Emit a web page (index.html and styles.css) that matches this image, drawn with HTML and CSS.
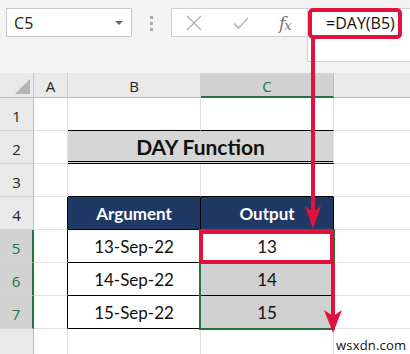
FILE: index.html
```html
<!DOCTYPE html>
<html>
<head>
<meta charset="utf-8">
<link rel="stylesheet" href="styles.css">
</head>
<body>
<div class="app">
  <div class="ribbon">
    <div class="namebox"><span class="ref">C5</span><span class="caret"></span></div>
    <div class="grip"><i></i><i></i><i></i></div>
    <div class="fxbtns">
      <svg class="ico-x" width="16" height="16" viewBox="0 0 16 16"><path d="M1 1L15 15M15 1L1 15" stroke="#b0b0b0" stroke-width="1.4" fill="none"/></svg>
      <svg class="ico-ok" width="16" height="14" viewBox="0 0 16 14"><path d="M1 7.5L5.5 12L15 2" stroke="#bdbdbd" stroke-width="1.8" fill="none"/></svg>
      <span class="fx">f<sub>x</sub></span>
    </div>
    <div class="fxinput">=DAY(B5)</div>
  </div>

  <div class="sheet">
    <div class="corner"><span class="tri"></span></div>
    <div class="colh">A</div>
    <div class="colh">B</div>
    <div class="colh sel">C</div>
    <div class="colh last"></div>

    <div class="rowh">1</div><div class="c"></div><div class="c bb"></div><div class="c bb"></div><div class="c last"></div>
    <div class="rowh">2</div><div class="c"></div><div class="c title">DAY Function</div><div class="c last"></div>
    <div class="rowh">3</div><div class="c"></div><div class="c bb"></div><div class="c bb"></div><div class="c last"></div>
    <div class="rowh">4</div><div class="c br"></div><div class="c th">Argument</div><div class="c th">Output</div><div class="c last"></div>
    <div class="rowh rsel">5</div><div class="c br"></div><div class="c td">13-Sep-22</div><div class="c td">13</div><div class="c last"></div>
    <div class="rowh rsel">6</div><div class="c br"></div><div class="c td">14-Sep-22</div><div class="c td shade">14</div><div class="c last"></div>
    <div class="rowh rsel">7</div><div class="c br"></div><div class="c td">15-Sep-22</div><div class="c td shade">15</div><div class="c last"></div>
    <div class="rowh end"></div><div class="c end"></div><div class="c end"></div><div class="c end"></div><div class="c end last"></div>
  </div>

  <div class="selection"></div>

  <svg class="marks" width="410" height="354" viewBox="0 0 410 354">
    <rect x="310" y="10" width="90" height="27" rx="3" fill="none" stroke="#e2123f" stroke-width="4"/>
    <line x1="313" y1="37" x2="313" y2="212" stroke="#e2123f" stroke-width="4"/>
    <polygon points="305,206 313,212 321,206 313,229" fill="#e2123f"/>
    <rect x="201" y="232" width="131" height="30" fill="none" stroke="#e2123f" stroke-width="4"/>
    <line x1="333" y1="262" x2="333" y2="318" stroke="#e2123f" stroke-width="4"/>
    <polygon points="324,310 333,316 342,310 333,333" fill="#e2123f"/>
  </svg>

  <div class="wm">wsxdn.com</div>
</div>
</body>
</html>
```

FILE: styles.css
```css
* { box-sizing: border-box; }
html, body { margin: 0; padding: 0; }
body { width: 410px; height: 354px; overflow: hidden; background: #fff; font-family: "Open Sans", "Noto Sans", sans-serif; }

.app { position: relative; width: 410px; height: 354px; overflow: hidden; }

.ribbon {
  height: 73px;
  background: #f3f3f3;
  display: flex;
  align-items: flex-start;
  padding-top: 8px;
  padding-left: 6px;
}
.namebox {
  width: 126px;
  height: 29px;
  background: #fff;
  border: 1px solid #c9c9c9;
  display: flex;
  align-items: center;
  padding-left: 7px;
  padding-right: 8px;
  justify-content: space-between;
}
.ref { font-size: 16px; color: #222; letter-spacing: 0.2px; }
.caret { width: 0; height: 0; border-left: 4px solid transparent; border-right: 4px solid transparent; border-top: 4px solid #6a6a6a; margin-top: 1px; }

.grip { width: 39px; display: flex; flex-direction: column; align-items: center; gap: 3px; padding-top: 8px; }
.grip i { display: block; width: 3px; height: 3px; background: #a9a9a9; }

.fxbtns {
  width: 136px;
  height: 29px;
  background: #fff;
  border: 1px solid #d0d0d0;
  border-right: none;
  display: flex;
  align-items: center;
  padding-left: 14px;
}
.ico-x { margin-right: 31px; }
.ico-ok { margin-right: 30px; }
.fx { font-family: "DejaVu Serif", "Liberation Serif", serif; font-style: italic; font-size: 17px; color: #707070; letter-spacing: -1px; }
.fx sub { font-size: 13px; vertical-align: -1px; }

.fxinput {
  flex: 1;
  height: 54px;
  background: #fff;
  border: 1px solid #d0d0d0;
  border-right: none;
  font-family: "Open Sans", sans-serif;
  font-size: 16px;
  color: #111;
  padding-left: 18px;
  padding-top: 2px;
  line-height: 24px;
}

.sheet {
  display: grid;
  grid-template-columns: 34px 34px 133px 133px 1fr;
  grid-template-rows: 25px repeat(7, 33px) 1fr;
  height: 281px;
}
.sheet > div { border-right: 1px solid #e1e1e1; border-bottom: 1px solid #e1e1e1; }

.corner { background: #e9e9e9; border-right: 1px solid #c8c8c8 !important; border-bottom: 1px solid #bdbdbd !important; position: relative; }
.tri { position: absolute; right: 3px; bottom: 3px; width: 0; height: 0; border-left: 15px solid transparent; border-bottom: 15px solid #b5b5b5; }

.colh {
  background: #e9e9e9;
  border-right: 1px solid #d2d2d2 !important;
  border-bottom: 1px solid #bdbdbd !important;
  font-family: "Open Sans", "Noto Sans", sans-serif;
  font-size: 15px;
  color: #222;
  display: flex;
  align-items: center;
  justify-content: center;
  padding-top: 2px;
}
.colh.sel { background: #d2d2d2; color: #217346; border-bottom: 2px solid #217346 !important; border-right-color: #bdbdbd !important; }
.colh.last { border-right: none !important; }

.rowh {
  background: #e9e9e9;
  border-right: 1px solid #bdbdbd !important;
  border-bottom: 1px solid #d4d4d4 !important;
  font-family: "Open Sans", "Noto Sans", sans-serif;
  font-size: 15px;
  color: #222;
  display: flex;
  align-items: center;
  justify-content: center;
  padding-top: 3px;
}
.rowh.rsel { background: #d2d2d2; color: #217346; border-right: 2px solid #217346 !important; }
.rowh.end { border-bottom: none !important; }

.c { background: #fff; }
.c.last { border-right: none !important; }
.c.end { border-bottom: none !important; }
.c.bb { border-bottom-color: #000 !important; }
.c.br { border-right-color: #000 !important; }

.title {
  grid-column: span 2;
  background: #d6d6d6;
  border-right: 1px solid #e1e1e1 !important;
  border-bottom: 3px double #000 !important;
  font-family: "Lato", "Open Sans", sans-serif;
  font-weight: 700;
  font-size: 21px;
  color: #111;
  display: flex;
  align-items: center;
  justify-content: center;
  padding-top: 1px;
}
.th {
  background: #203864;
  color: #fff;
  border-right: 1px solid #000 !important;
  border-bottom: 1px solid #000 !important;
  font-family: "Lato", "Open Sans", sans-serif;
  font-weight: 700;
  font-size: 17px;
  display: flex;
  align-items: center;
  justify-content: center;
  padding-top: 1px;
}
.td {
  border-right: 1px solid #000 !important;
  border-bottom: 1px solid #000 !important;
  font-family: "Lato", "Open Sans", sans-serif;
  font-size: 17px;
  color: #111;
  display: flex;
  align-items: center;
  justify-content: center;
  padding-top: 1px;
}
.td.shade { background: #d0d0d0; }

.selection {
  position: absolute;
  left: 199px;
  top: 229px;
  width: 136px;
  height: 101px;
  border: 2px solid #217346;
  pointer-events: none;
}

.marks { position: absolute; left: 0; top: 0; pointer-events: none; }

.wm {
  position: absolute;
  left: 336px;
  top: 336px;
  font-family: "Open Sans", "Noto Sans", sans-serif;
  font-size: 13px;
  color: #111;
  letter-spacing: 0.2px;
}
```
